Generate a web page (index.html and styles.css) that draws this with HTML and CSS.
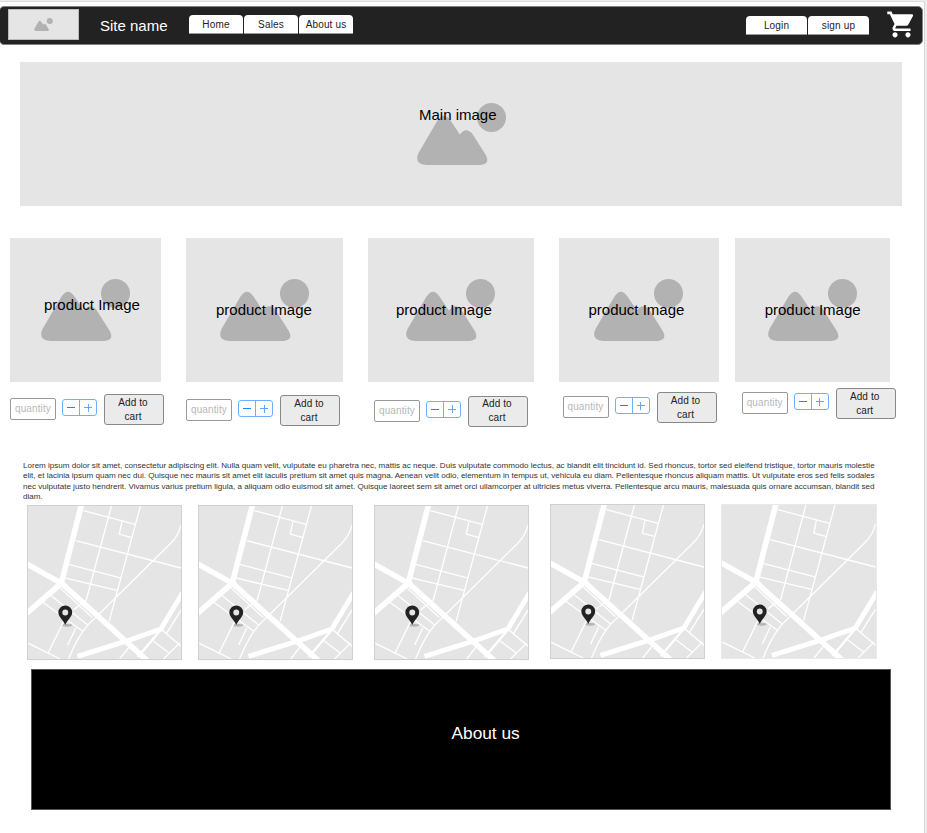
FILE: index.html
```html
<!DOCTYPE html>
<html lang="en">
<head>
<meta charset="utf-8">
<title>Site name</title>
<link rel="stylesheet" href="styles.css">
</head>
<body>
<svg class="defs" aria-hidden="true">
  <symbol id="picture" viewBox="0 0 89 62">
    <circle cx="74.5" cy="14.6" r="14.5"/>
    <path d="M20.5 17.500Q27 8 33.500 17.500L42.800 31.500Q49 23.300 55.500 31L68.800 52Q73.500 61 64 62H10Q-3.500 61.500 1.500 50Z"/>
  </symbol>
  <symbol id="map" viewBox="37 22 464 464">
    <g fill="none" stroke="#fff">
      <g stroke-width="17">
        <path d="M200 15L138 256L400 492M30 196L138 256L30 350"/>
        <path d="M187 478L340 430L440 395L506 285" stroke-width="15"/>
      </g>
      <path d="M440 397L370 480" stroke-width="7"/>
      <path stroke-width="4" d="M205 36L362 78M290 22L213 310M378 22L283 372M322 68L314 107L352 118M182 127L501 210M160 199L317 240M148 240L307 278M501 80Q493 112 470 135L235 367Q195 400 160 486M132 268L232 360M104 291L217 382M82 314L203 402M210 309L175 337M145 372L98 468M37 438L135 486M182 392L157 444M345 448L315 486M440 395L501 447M415 430L465 468M501 338L457 408M497 437L448 486"/>
    </g>
    <ellipse cx="156" cy="384" rx="15" ry="4" fill="#b5b5b5"/>
    <path fill="#222" fill-rule="evenodd" d="M150 383C144 368 129 358 129 345a21 21 0 0 1 42 0C171 358 156 368 150 383ZM150 336a9 9 0 1 0 0 18a9 9 0 0 0 0-18Z"/>
  </symbol>
</svg>

<main class="page">
  <header class="topbar">
    <div class="logo"><svg><use href="#picture"/></svg></div>
    <h1 class="site-name">Site name</h1>
    <nav class="tabs"><a>Home</a><a>Sales</a><a>About us</a></nav>
    <nav class="tabs account"><a>Login</a><a>sign up</a></nav>
    <svg class="cart" viewBox="0 0 24 24"><path d="M7 18c-1.100 0-1.990.9-1.990 2S5.900 22 7 22s2-.9 2-2-.9-2-2-2zM1 2v2h2l3.600 7.590-1.350 2.450c-.16.28-.25.61-.25.96 0 1.100.9 2 2 2h12v-2H7.420c-.14 0-.25-.11-.25-.25l.03-.12.900-1.630h7.450c.75 0 1.410-.41 1.750-1.030l3.580-6.490c.08-.14.12-.31.12-.48 0-.55-.45-1-1-1H5.210l-.94-2H1zm16 16c-1.100 0-1.990.9-1.990 2s.89 2 1.990 2 2-.9 2-2-.9-2-2-2z"/></svg>
  </header>

  <section class="picture hero"><svg><use href="#picture"/></svg><span class="label">Main image</span></section>

  <section class="products">
    <article class="product">
      <div class="picture"><svg><use href="#picture"/></svg><span class="label">product Image</span></div>
      <div class="controls"><span class="quantity">quantity</span><span class="stepper"><i class="minus"></i><i class="plus"></i></span><button>Add to cart</button></div>
    </article>
    <article class="product">
      <div class="picture"><svg><use href="#picture"/></svg><span class="label">product Image</span></div>
      <div class="controls"><span class="quantity">quantity</span><span class="stepper"><i class="minus"></i><i class="plus"></i></span><button>Add to cart</button></div>
    </article>
    <article class="product">
      <div class="picture"><svg><use href="#picture"/></svg><span class="label">product Image</span></div>
      <div class="controls"><span class="quantity">quantity</span><span class="stepper"><i class="minus"></i><i class="plus"></i></span><button>Add to cart</button></div>
    </article>
    <article class="product">
      <div class="picture"><svg><use href="#picture"/></svg><span class="label">product Image</span></div>
      <div class="controls"><span class="quantity">quantity</span><span class="stepper"><i class="minus"></i><i class="plus"></i></span><button>Add to cart</button></div>
    </article>
    <article class="product">
      <div class="picture"><svg><use href="#picture"/></svg><span class="label">product Image</span></div>
      <div class="controls"><span class="quantity">quantity</span><span class="stepper"><i class="minus"></i><i class="plus"></i></span><button>Add to cart</button></div>
    </article>
  </section>

  <p class="intro">Lorem ipsum dolor sit amet, consectetur adipiscing elit. Nulla quam velit, vulputate eu pharetra nec, mattis ac neque. Duis vulputate commodo lectus, ac blandit elit tincidunt id. Sed rhoncus, tortor sed eleifend tristique, tortor mauris molestie elit, et lacinia ipsum quam nec dui. Quisque nec mauris sit amet elit iaculis pretium sit amet quis magna. Aenean velit odio, elementum in tempus ut, vehicula eu diam. Pellentesque rhoncus aliquam mattis. Ut vulputate eros sed felis sodales nec vulputate justo hendrerit. Vivamus varius pretium ligula, a aliquam odio euismod sit amet. Quisque laoreet sem sit amet orci ullamcorper at ultricies metus viverra. Pellentesque arcu mauris, malesuada quis ornare accumsan, blandit sed diam.</p>

  <section class="maps">
    <svg class="map"><use href="#map"/></svg>
    <svg class="map"><use href="#map"/></svg>
    <svg class="map"><use href="#map"/></svg>
    <svg class="map raised"><use href="#map"/></svg>
    <svg class="map raised last"><use href="#map"/></svg>
  </section>

  <footer class="about"><h2>About us</h2></footer>
</main>
</body>
</html>
```
FILE: styles.css
```css
* { box-sizing: border-box; }

body {
  margin: 0;
  height: 833px;
  overflow: hidden;
  background: #eee;
  font-family: "Liberation Sans", Arial, sans-serif;
  color: #000;
}

.defs { position: absolute; width: 0; height: 0; }

.page {
  width: 925px;
  height: 832px;
  margin-top: 1px;
  background: #fff;
  border-top: 1px solid #ddd;
  border-right: 1px solid #d5d5d5;
  display: flex;
  flex-direction: column;
  align-items: flex-start;
}

.topbar {
  width: 924px;
  height: 39px;
  margin: 4px 0 0 -1px;
  background: #222;
  border: 1px solid #808080;
  border-radius: 5px;
  display: flex;
  align-items: flex-start;
}

.logo {
  width: 71px;
  height: 31px;
  margin: 2px 0 0 8px;
  background: #e5e5e5;
  border: 1px solid #bbb;
  display: flex;
  align-items: center;
  justify-content: center;
  fill: #b2b2b2;
}
.logo svg { width: 19px; height: 13px; }

.site-name {
  width: 89px;
  margin: 10px 0 0 21px;
  font-size: 15px;
  line-height: 18px;
  font-weight: 400;
  color: #fff;
}

.tabs { display: flex; gap: 1px; margin-top: 8px; }
.tabs a {
  width: 54px;
  height: 19px;
  background: #fff;
  border-radius: 4px 4px 0 0;
  border-bottom: 1px solid #999;
  font-size: 10px;
  line-height: 20px;
  letter-spacing: .15px;
  text-align: center;
  color: #222;
}
.tabs.account { margin: 9px 0 0 393px; gap: 1px; }
.tabs.account a { width: 61px; }

.cart { width: 31px; height: 31px; margin: 2px 0 0 17px; fill: #fff; }

.picture {
  position: relative;
  height: 144px;
  background: #e5e5e5;
  display: flex;
  align-items: center;
  justify-content: center;
  fill: #b2b2b2;
}
.picture svg { width: 89px; height: 62px; }
.label {
  position: absolute;
  top: 63px;
  left: 30px;
  font-size: 15px;
  line-height: 18px;
  white-space: nowrap;
}

.hero { width: 882px; margin: 17px 0 0 20px; }
.hero .label { top: 44px; left: 399px; }

.products { display: flex; height: 190px; margin: 32px 0 0 10px; }
.product { flex: none; width: 151px; margin-right: 25px; }
.product:nth-child(2) { width: 156.5px; }
.product:nth-child(3) { width: 166px; }
.product:nth-child(4) { width: 160.4px; margin-right: 15.800px; }
.product:nth-child(5) { width: 155.6px; margin-right: 0; }

.product:nth-child(1) .label { top: 58px; left: 34px; }
.product:nth-child(3) .label { left: 28.5px; }

.controls { display: flex; align-items: flex-start; width: 154px; margin-top: 12px; }
.product:nth-child(2) .controls { margin-top: 13px; }
.product:nth-child(3) .controls { margin: 13.500px 0 0 6.500px; }
.product:nth-child(4) .controls { margin: 10px 0 0 4px; }
.product:nth-child(5) .controls { margin: 6px 0 0 7px; }

.quantity {
  width: 46px;
  height: 22px;
  margin-top: 4px;
  border: 1px solid #999;
  border-radius: 2px;
  font-size: 10px;
  line-height: 20px;
  letter-spacing: .12px;
  text-align: center;
  color: #b8b8b8;
}

.stepper {
  display: flex;
  width: 35px;
  height: 17px;
  margin: 5px 7px 0 6px;
  border: 1px solid #6eb0ff;
  border-radius: 3px;
}
.stepper i {
  flex: 1;
  background: linear-gradient(#1b86ff, #1b86ff) center / 8px 1px no-repeat;
}
.stepper .plus {
  border-left: 1px solid #6eb0ff;
  background: linear-gradient(#5ca8ff, #5ca8ff) center / 8px 1px no-repeat, linear-gradient(#5ca8ff, #5ca8ff) center / 1px 8px no-repeat;
}

button {
  width: 60px;
  height: 31px;
  padding: 0 10px 0 8px;
  background: #ebebeb;
  border: 1px solid #888;
  border-radius: 3px;
  font: 10px/14px "Liberation Sans", Arial, sans-serif;
  letter-spacing: .1px;
  color: #222;
}

.intro {
  width: 856px;
  height: 42px;
  margin: 33px 0 0 23px;
  font-size: 8.055px;
  line-height: 10.400px;
  color: #333;
}

.maps { display: flex; height: 156px; margin: 2px 0 0 27px; align-items: flex-start; }
.map {
  width: 155px;
  height: 155px;
  margin-right: 21px;
  background: #e5e5e5;
  border: 1px solid #d0d0d0;
}
.map:first-child { margin-right: 16px; }
.map.raised { margin: -1px 16px 0 0; }
.map.last { width: 156px; border-color: #e9e9e9; margin-right: 0; }

.about {
  width: 860px;
  height: 141px;
  margin: 8px 0 0 31px;
  background: #000;
  border: 1px solid #555;
}
.about h2 {
  margin: 53px 0 0 419.500px;
  font-size: 17.300px;
  line-height: 20px;
  font-weight: 400;
  color: #fff;
}
```
